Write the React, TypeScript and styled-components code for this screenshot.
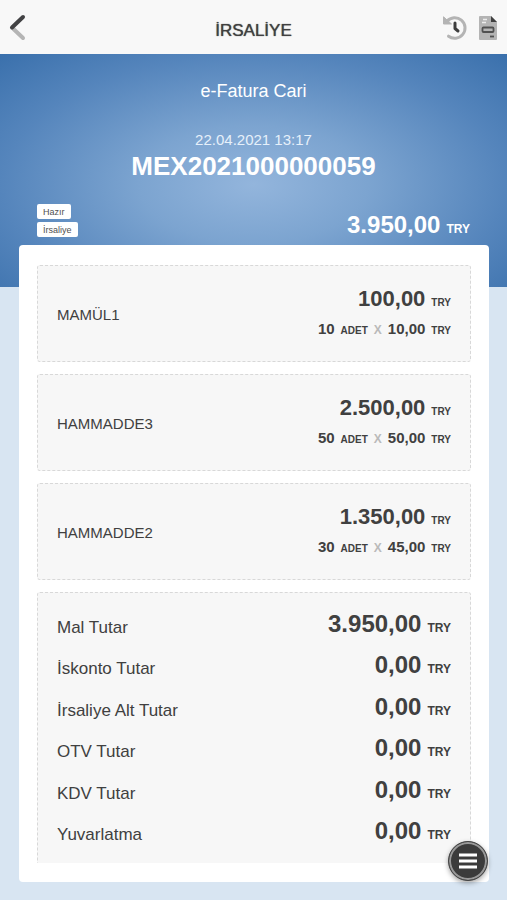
import React from 'react';
import styled, { createGlobalStyle } from 'styled-components';

const GlobalStyle = createGlobalStyle`
  *, *::before, *::after { box-sizing: border-box; }
  body {
    margin: 0;
    background: #d8e5f2;
    color: #404040;
    font-family: "Liberation Sans", Arial, sans-serif;
  }
  h1, h2, p, dl, dd, ul { margin: 0; padding: 0; }
  ul { list-style: none; }
`;

const Screen = styled.div`
  display: flex;
  flex-direction: column;
  height: 100vh;
`;

const TopBar = styled.header`
  display: grid;
  grid-template-columns: 1fr auto 1fr;
  align-items: center;
  flex: none;
  height: 54px;
  padding: 2px 9px 0;
  background: #f8f8f8;
`;

const Title = styled.h1`
  padding-top: 6px;
  font-size: 17px;
  font-weight: 400;
  line-height: 20px;
  text-shadow: 0 0 1px #404040;
`;

const Actions = styled.div`
  display: flex;
  justify-content: flex-end;
  gap: 10px;
`;

const IconButton = styled.button`
  display: flex;
  justify-self: start;
  padding: 0;
  border: 0;
  background: none;
  cursor: pointer;
`;

const Hero = styled.section`
  flex: none;
  padding: 26px 37px 44px;
  background: radial-gradient(ellipse farthest-corner at 50% 56%, #93b5dc 0, #7ca4d0 32%, #5585bc 70%, #3a70ac 100%);
  color: #fff;
  text-align: center;
`;

const Customer = styled.p`
  font-size: 18px;
  line-height: 22px;
`;

const IssueDate = styled.p`
  padding-top: 28px;
  font-size: 15px;
  line-height: 20px;
  color: #e6f0fa;
`;

const DocumentNumber = styled.h2`
  font-size: 26px;
  line-height: 32px;
`;

const HeroFooter = styled.div`
  display: flex;
  justify-content: space-between;
  align-items: flex-end;
  padding-top: 22px;
`;

const Tags = styled.ul`
  display: flex;
  flex-direction: column;
  align-items: flex-start;
  gap: 3px;
  padding-bottom: 6px;
`;

const Tag = styled.li`
  padding: 1px 6px 0;
  border-radius: 2px;
  background: #fff;
  color: #505050;
  font-size: 9px;
  line-height: 14px;
`;

const sizes = {
  small: { value: 15, unit: 10, line: 20 },
  medium: { value: 22, unit: 10, line: 32 },
  large: { value: 24, unit: 12, line: 28 },
};

const Amount = styled.span<{ $size: keyof typeof sizes }>`
  display: flex;
  align-items: baseline;
  gap: 6px;
  font-size: ${(p) => sizes[p.$size].value}px;
  font-weight: 700;
  line-height: ${(p) => sizes[p.$size].line}px;
  white-space: nowrap;

  small { font-size: ${(p) => sizes[p.$size].unit}px; }
`;

const Sheet = styled.main`
  display: flex;
  flex: 1;
  min-height: 0;
  margin: -42px 18px 18px 19px;
  padding: 20px 18px 19px;
  border-radius: 4px;
  background: #fff;
`;

const Scroller = styled.div`
  display: flex;
  flex: 1;
  flex-direction: column;
  gap: 12px;
  overflow-y: auto;
  scrollbar-width: none;
`;

const LineItem = styled.article`
  display: flex;
  flex: none;
  align-items: center;
  justify-content: space-between;
  height: 97px;
  padding: 0 19px;
  border: 1px dashed #d8d8d8;
  border-radius: 3px;
  background: #f7f7f7;
`;

const ItemName = styled.h2`
  padding-top: 2px;
  font-size: 15px;
  font-weight: 400;
`;

const ItemFigures = styled.div`
  display: flex;
  flex-direction: column;
  align-items: flex-end;
  padding-bottom: 4px;
`;

const Calculation = styled.div`
  display: flex;
  align-items: baseline;
  gap: 6px;
`;

const Times = styled.span`
  color: #bababa;
  font-size: 12px;
  font-weight: 700;
`;

const Totals = styled.dl`
  display: grid;
  flex: none;
  grid-template-rows: repeat(6, 1fr);
  height: 283px;
  padding: 12px 19px 20px;
  border: 1px dashed #d8d8d8;
  border-radius: 3px;
  background: #f7f7f7;
`;

const TotalRow = styled.div`
  display: flex;
  align-items: center;
  justify-content: space-between;

  dt { padding-top: 4px; font-size: 17px; line-height: 20px; }
`;

const MenuButton = styled.button`
  position: fixed;
  right: 19px;
  bottom: 19px;
  display: flex;
  align-items: center;
  justify-content: center;
  width: 40px;
  height: 40px;
  padding: 0;
  border: 1px solid #444;
  border-radius: 50%;
  background: #3b3b3b;
  box-shadow: inset 0 0 0 2px #999, 0 2px 5px rgba(0, 0, 0, 0.35);
  cursor: pointer;
`;

const items = [
  { name: 'MAMÜL1', total: '100,00', quantity: '10', price: '10,00' },
  { name: 'HAMMADDE3', total: '2.500,00', quantity: '50', price: '50,00' },
  { name: 'HAMMADDE2', total: '1.350,00', quantity: '30', price: '45,00' },
];

const totals = [
  ['Mal Tutar', '3.950,00'],
  ['İskonto Tutar', '0,00'],
  ['İrsaliye Alt Tutar', '0,00'],
  ['OTV Tutar', '0,00'],
  ['KDV Tutar', '0,00'],
  ['Yuvarlatma', '0,00'],
];

function Money({ value, unit = 'TRY', size }: { value: string; unit?: string; size: keyof typeof sizes }) {
  return (
    <Amount $size={size}>
      {value}
      <small>{unit}</small>
    </Amount>
  );
}

function BackIcon() {
  return (
    <svg width="20" height="28" viewBox="0 0 20 28" fill="none" strokeWidth="4" strokeLinecap="round" aria-hidden="true">
      <path d="M4.5 15 14 24" stroke="#b5b5b5" />
      <path d="M14 3 3 13.5" stroke="#424244" />
    </svg>
  );
}

function HistoryIcon() {
  return (
    <svg width="26" height="26" viewBox="0 0 26 26" fill="none" aria-hidden="true">
      <path d="M5 6.2A10.3 10.3 0 1 1 6.5 21.2" stroke="#b4b4b4" strokeWidth="3" strokeLinecap="round" />
      <path d="M1.5 1.8V9H9.5Z" fill="#b4b4b4" stroke="#b4b4b4" strokeLinejoin="round" />
      <path d="M13 8v5.5l3 2.5" stroke="#3e3e3e" strokeWidth="3" strokeLinecap="round" strokeLinejoin="round" />
    </svg>
  );
}

function DocumentIcon() {
  return (
    <svg width="20" height="26" viewBox="0 0 20 26" fill="none" aria-hidden="true">
      <path d="M2 1H13L19 7V24a1 1 0 0 1-1 1H2a1 1 0 0 1-1-1V2a1 1 0 0 1 1-1Z" fill="#b4b4b4" />
      <path d="M13 1 19 7H13Z" fill="#404040" />
      <path d="M5 4.5h4M4 7.5h4" stroke="#ececec" strokeWidth="1.5" />
      <rect x="4.5" y="12.5" width="11" height="4.5" rx="1" stroke="#505050" strokeWidth="1.8" />
      <path d="M12 21.5h4" stroke="#505050" strokeWidth="1.8" />
    </svg>
  );
}

export default function App() {
  return (
    <Screen>
      <GlobalStyle />
      <TopBar>
        <IconButton type="button" aria-label="Geri"><BackIcon /></IconButton>
        <Title>İRSALİYE</Title>
        <Actions>
          <IconButton type="button" aria-label="Geçmiş"><HistoryIcon /></IconButton>
          <IconButton type="button" aria-label="Belge"><DocumentIcon /></IconButton>
        </Actions>
      </TopBar>
      <Hero>
        <Customer>e-Fatura Cari</Customer>
        <IssueDate>22.04.2021 13:17</IssueDate>
        <DocumentNumber>MEX2021000000059</DocumentNumber>
        <HeroFooter>
          <Tags>
            <Tag>Hazır</Tag>
            <Tag>İrsaliye</Tag>
          </Tags>
          <Money value="3.950,00" size="large" />
        </HeroFooter>
      </Hero>
      <Sheet>
        <Scroller>
          {items.map((item) => (
            <LineItem key={item.name}>
              <ItemName>{item.name}</ItemName>
              <ItemFigures>
                <Money value={item.total} size="medium" />
                <Calculation>
                  <Money value={item.quantity} unit="ADET" size="small" />
                  <Times>X</Times>
                  <Money value={item.price} size="small" />
                </Calculation>
              </ItemFigures>
            </LineItem>
          ))}
          <Totals>
            {totals.map(([label, value]) => (
              <TotalRow key={label}>
                <dt>{label}</dt>
                <dd><Money value={value} size="large" /></dd>
              </TotalRow>
            ))}
          </Totals>
        </Scroller>
      </Sheet>
      <MenuButton type="button" aria-label="Menü">
        <svg width="20" height="18" viewBox="0 0 20 18" stroke="#fff" strokeWidth="3" aria-hidden="true">
          <path d="M1 3h18M1 9h18M1 15h18" />
        </svg>
      </MenuButton>
    </Screen>
  );
}
